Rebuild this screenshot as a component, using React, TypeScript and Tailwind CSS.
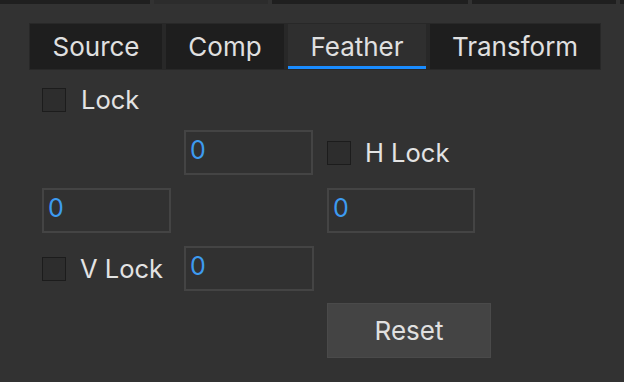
import { useState } from "react";

const tabs = [
  { name: "Source", w: "w-[132px]" },
  { name: "Comp", w: "w-[118px]" },
  { name: "Feather", w: "w-[138px]" },
  { name: "Transform", w: "w-[170px]" },
];

function Check({ label, gap }: { label: string; gap: string }) {
  const [on, setOn] = useState(false);
  return (
    <label className={`flex items-center ${gap} cursor-pointer select-none`}>
      <span
        onClick={() => setOn(!on)}
        className="w-[24px] h-[24px] bg-[#2d2d2d] border border-[#1c1c1c] flex items-center justify-center text-[#3d9bf0] text-[16px]"
      >
        {on ? "✓" : ""}
      </span>
      <span className="text-[25.5px] text-[#e3e3e3] leading-none">{label}</span>
    </label>
  );
}

function NumBox({ w }: { w: string }) {
  const [val, setVal] = useState("0");
  return (
    <input
      value={val}
      onChange={(e) => setVal(e.target.value)}
      className={`${w} h-[45px] bg-[#313131] border-2 border-[#444444] pl-[4px] pb-[6px] text-[25px] text-[#3d9bf0] outline-none`}
    />
  );
}

export default function App() {
  const [active, setActive] = useState("Feather");

  return (
    <div
      className="w-[624px] h-[382px] bg-[#323232] overflow-hidden"
      style={{ fontFamily: "Inter, 'Noto Sans', sans-serif" }}
    >
      <div className="flex h-[4px]">
        <div className="w-[150px] bg-[#1f1f1f]" />
        <div className="w-[4px]" />
        <div className="w-[114px] bg-[#2c2c2c]" />
        <div className="w-[4px]" />
        <div className="w-[196px] bg-[#1f1f1f]" />
        <div className="w-[4px]" />
        <div className="w-[144px] bg-[#1f1f1f]" />
        <div className="w-[4px]" />
        <div className="w-[4px] bg-[#1f1f1f]" />
      </div>

      <div className="mt-[19px] ml-[29px] w-[572px] h-[47px] bg-[#282828] p-[1px] flex gap-[4px]">
        {tabs.map((t) => (
          <button
            key={t.name}
            onClick={() => setActive(t.name)}
            className={`${t.w} h-[45px] flex items-center justify-center text-[26px] text-[#e0e0e0] ${
              active === t.name
                ? "bg-[#2f2f2f] border-b-[3px] border-[#1a8cff] pt-[3px]"
                : "bg-[#1e1e1e]"
            }`}
          >
            {t.name}
          </button>
        ))}
      </div>

      <div className="pl-[42px] mt-[18px]">
        <div className="h-[24px] flex items-center">
          <Check label="Lock" gap="gap-[15px]" />
        </div>

        <div className="mt-[18px] grid grid-cols-[142px_143px_auto] items-center">
          <div />
          <NumBox w="w-[129px]" />
          <Check label="H Lock" gap="gap-[14px]" />
        </div>

        <div className="mt-[13px] grid grid-cols-[142px_143px_auto] items-center">
          <NumBox w="w-[129px]" />
          <div />
          <NumBox w="w-[148px]" />
        </div>

        <div className="mt-[13px] grid grid-cols-[142px_143px_auto] items-center">
          <Check label="V Lock" gap="gap-[14px]" />
          <NumBox w="w-[130px]" />
          <div />
        </div>

        <div className="mt-[12px] grid grid-cols-[142px_143px_auto]">
          <div />
          <div />
          <button className="w-[164px] h-[55px] bg-[#444444] border border-[#4a4a4a] text-[26px] text-[#e0e0e0]">
            Reset
          </button>
        </div>
      </div>
    </div>
  );
}
